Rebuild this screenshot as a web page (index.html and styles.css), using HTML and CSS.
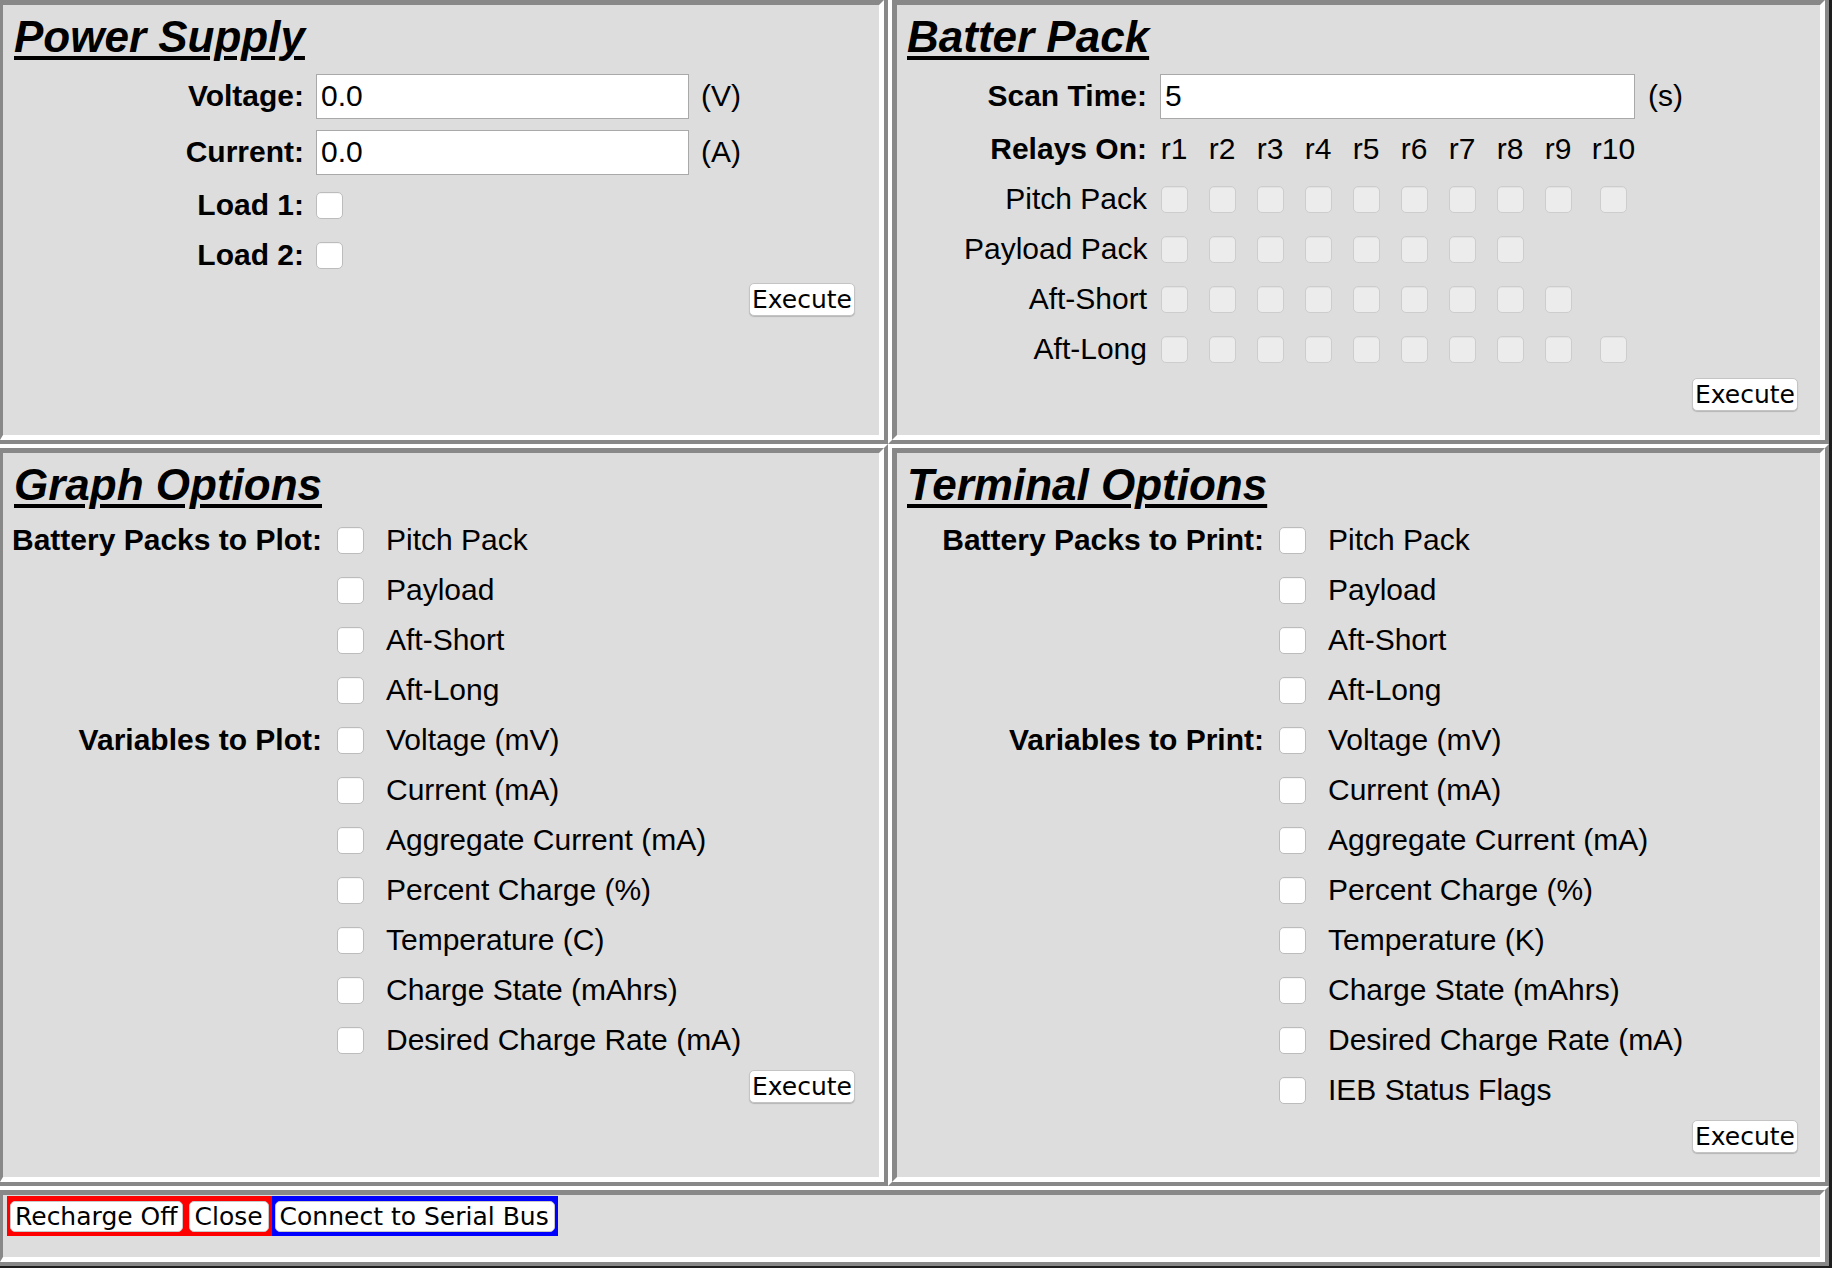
FILE: index.html
```html
<!DOCTYPE html>
<html lang="en">
<head>
<meta charset="utf-8">
<title>Battery Control Panel</title>
<link rel="stylesheet" href="styles.css">
</head>
<body>
<div class="screen">

  <div class="frame f-tl">
    <section class="panel p-left">
      <h2 class="title">Power Supply</h2>
      <div class="ps-form">
        <span class="lbl">Voltage:</span><input class="txt" type="text" value="0.0"><span class="unit">(V)</span>
        <span class="lbl">Current:</span><input class="txt" type="text" value="0.0"><span class="unit">(A)</span>
        <span class="lbl">Load 1:</span><input class="cb" type="checkbox"><span></span>
        <span class="lbl">Load 2:</span><input class="cb" type="checkbox"><span></span>
      </div>
      <button class="exec" type="button">Execute</button>
    </section>
  </div>

  <div class="frame f-tr">
    <section class="panel p-right">
      <h2 class="title">Batter Pack</h2>
      <div class="bp-form">
        <span class="lbl">Scan Time:</span><input class="txt span10" type="text" value="5"><span class="unit">(s)</span>

        <span class="lbl">Relays On:</span>
        <span class="rc">r1</span><span class="rc">r2</span><span class="rc">r3</span><span class="rc">r4</span><span class="rc">r5</span><span class="rc">r6</span><span class="rc">r7</span><span class="rc">r8</span><span class="rc">r9</span><span class="rc rc10">r10</span><span></span>

        <span class="lbl reg">Pitch Pack</span>
        <span class="rc"><input class="cb dis" type="checkbox"></span><span class="rc"><input class="cb dis" type="checkbox"></span><span class="rc"><input class="cb dis" type="checkbox"></span><span class="rc"><input class="cb dis" type="checkbox"></span><span class="rc"><input class="cb dis" type="checkbox"></span><span class="rc"><input class="cb dis" type="checkbox"></span><span class="rc"><input class="cb dis" type="checkbox"></span><span class="rc"><input class="cb dis" type="checkbox"></span><span class="rc"><input class="cb dis" type="checkbox"></span><span class="rc rc10"><input class="cb dis" type="checkbox"></span><span></span>

        <span class="lbl reg">Payload Pack</span>
        <span class="rc"><input class="cb dis" type="checkbox"></span><span class="rc"><input class="cb dis" type="checkbox"></span><span class="rc"><input class="cb dis" type="checkbox"></span><span class="rc"><input class="cb dis" type="checkbox"></span><span class="rc"><input class="cb dis" type="checkbox"></span><span class="rc"><input class="cb dis" type="checkbox"></span><span class="rc"><input class="cb dis" type="checkbox"></span><span class="rc"><input class="cb dis" type="checkbox"></span><span class="rc"></span><span class="rc rc10"></span><span></span>

        <span class="lbl reg">Aft-Short</span>
        <span class="rc"><input class="cb dis" type="checkbox"></span><span class="rc"><input class="cb dis" type="checkbox"></span><span class="rc"><input class="cb dis" type="checkbox"></span><span class="rc"><input class="cb dis" type="checkbox"></span><span class="rc"><input class="cb dis" type="checkbox"></span><span class="rc"><input class="cb dis" type="checkbox"></span><span class="rc"><input class="cb dis" type="checkbox"></span><span class="rc"><input class="cb dis" type="checkbox"></span><span class="rc"><input class="cb dis" type="checkbox"></span><span class="rc rc10"></span><span></span>

        <span class="lbl reg">Aft-Long</span>
        <span class="rc"><input class="cb dis" type="checkbox"></span><span class="rc"><input class="cb dis" type="checkbox"></span><span class="rc"><input class="cb dis" type="checkbox"></span><span class="rc"><input class="cb dis" type="checkbox"></span><span class="rc"><input class="cb dis" type="checkbox"></span><span class="rc"><input class="cb dis" type="checkbox"></span><span class="rc"><input class="cb dis" type="checkbox"></span><span class="rc"><input class="cb dis" type="checkbox"></span><span class="rc"><input class="cb dis" type="checkbox"></span><span class="rc rc10"><input class="cb dis" type="checkbox"></span><span></span>
      </div>
      <button class="exec" type="button">Execute</button>
    </section>
  </div>

  <div class="frame f-bl">
    <section class="panel p-left">
      <h2 class="title">Graph Options</h2>
      <div class="opt-form graph">
        <span class="lbl">Battery Packs to Plot:</span><input class="cb" type="checkbox"><span class="opt">Pitch Pack</span>
        <span></span><input class="cb" type="checkbox"><span class="opt">Payload</span>
        <span></span><input class="cb" type="checkbox"><span class="opt">Aft-Short</span>
        <span></span><input class="cb" type="checkbox"><span class="opt">Aft-Long</span>
        <span class="lbl">Variables to Plot:</span><input class="cb" type="checkbox"><span class="opt">Voltage (mV)</span>
        <span></span><input class="cb" type="checkbox"><span class="opt">Current (mA)</span>
        <span></span><input class="cb" type="checkbox"><span class="opt">Aggregate Current (mA)</span>
        <span></span><input class="cb" type="checkbox"><span class="opt">Percent Charge (%)</span>
        <span></span><input class="cb" type="checkbox"><span class="opt">Temperature (C)</span>
        <span></span><input class="cb" type="checkbox"><span class="opt">Charge State (mAhrs)</span>
        <span></span><input class="cb" type="checkbox"><span class="opt">Desired Charge Rate (mA)</span>
      </div>
      <button class="exec" type="button">Execute</button>
    </section>
  </div>

  <div class="frame f-br">
    <section class="panel p-right">
      <h2 class="title">Terminal Options</h2>
      <div class="opt-form term">
        <span class="lbl">Battery Packs to Print:</span><input class="cb" type="checkbox"><span class="opt">Pitch Pack</span>
        <span></span><input class="cb" type="checkbox"><span class="opt">Payload</span>
        <span></span><input class="cb" type="checkbox"><span class="opt">Aft-Short</span>
        <span></span><input class="cb" type="checkbox"><span class="opt">Aft-Long</span>
        <span class="lbl">Variables to Print:</span><input class="cb" type="checkbox"><span class="opt">Voltage (mV)</span>
        <span></span><input class="cb" type="checkbox"><span class="opt">Current (mA)</span>
        <span></span><input class="cb" type="checkbox"><span class="opt">Aggregate Current (mA)</span>
        <span></span><input class="cb" type="checkbox"><span class="opt">Percent Charge (%)</span>
        <span></span><input class="cb" type="checkbox"><span class="opt">Temperature (K)</span>
        <span></span><input class="cb" type="checkbox"><span class="opt">Charge State (mAhrs)</span>
        <span></span><input class="cb" type="checkbox"><span class="opt">Desired Charge Rate (mA)</span>
        <span></span><input class="cb" type="checkbox"><span class="opt">IEB Status Flags</span>
      </div>
      <button class="exec" type="button">Execute</button>
    </section>
  </div>

  <div class="frame f-bot">
    <section class="panel p-left bar">
      <div class="btns">
        <span class="bwrap red"><button class="bb" type="button">Recharge Off</button></span>
        <span class="bwrap red"><button class="bb" type="button">Close</button></span>
        <span class="bwrap blue"><button class="bb" type="button">Connect to Serial Bus</button></span>
      </div>
    </section>
  </div>

</div>
</body>
</html>
```

FILE: styles.css
```css
html, body {
  margin: 0;
  padding: 0;
}

body {
  background: #1d1d1d;
  font-family: "Liberation Sans", Arial, Helvetica, sans-serif;
  font-size: 30px;
  color: #000;
  width: 1832px;
  height: 1268px;
  overflow: hidden;
}

.screen {
  display: grid;
  grid-template-columns: 888px 941px;
  grid-template-rows: 444px 742px 80px;
  width: 1829px;
  height: 1266px;
}

/* outer (outset-looking) frame edge */
.frame {
  box-sizing: border-box;
  display: flex;
  border-style: solid;
  border-width: 4px;
  border-color: #fff #888 #888 #fff;
  min-width: 0;
  min-height: 0;
}

.f-tl, .f-tr { border-top-width: 0; }
.f-tl, .f-bl, .f-bot { border-left-width: 0; }
.f-bot { grid-column: 1 / 3; }

/* inner (inset-looking) panel edge */
.panel {
  flex: 1;
  box-sizing: border-box;
  display: flex;
  flex-direction: column;
  border-style: solid;
  border-width: 5px;
  border-color: #888 #fff #fff #888;
  background: #dddddd;
  min-width: 0;
}

.p-left { border-left-width: 3px; }

.title {
  margin: 0;
  padding: 7px 0 0 10px;
  font-size: 44px;
  line-height: 50px;
  font-weight: bold;
  font-style: italic;
  text-decoration: underline;
  text-decoration-thickness: 4px;
  text-underline-offset: 4px;
}

.p-left .title { padding-left: 11px; }

.lbl {
  font-weight: bold;
  text-align: right;
  white-space: nowrap;
}

.lbl.reg { font-weight: normal; }

.unit { white-space: nowrap; }

.txt {
  box-sizing: border-box;
  height: 45px;
  margin: 0;
  padding: 0 4px;
  border: 1px solid #a9a9a9;
  background: #fff;
  font-family: "Liberation Sans", Arial, Helvetica, sans-serif;
  font-size: 30px;
  color: #000;
  outline: none;
}

.cb {
  -webkit-appearance: none;
  appearance: none;
  box-sizing: border-box;
  width: 27px;
  height: 27px;
  margin: 0;
  border: 1px solid #bcbcbc;
  border-radius: 5px;
  background: #fff;
  box-shadow: inset 0 1px 0 rgba(0, 0, 0, 0.04);
}

.cb.dis {
  background: #ececec;
  border-color: #cdcdcd;
}

/* Power supply */
.ps-form {
  display: grid;
  grid-template-columns: 118px 373px max-content;
  grid-template-rows: 56px 56px 50px 50px;
  column-gap: 12px;
  align-items: center;
  justify-items: start;
  margin: 6px 0 0 183px;
}

.ps-form .lbl { justify-self: end; }
.ps-form .txt { width: 373px; }

/* Battery pack */
.bp-form {
  display: grid;
  grid-template-columns: 196px repeat(9, 48px) 43px max-content;
  grid-template-rows: 56px repeat(5, 50px);
  align-items: center;
  margin: 6px 0 0 67px;
}

.bp-form .lbl {
  padding-right: 13px;
}

.bp-form .span10 {
  grid-column: 2 / 12;
  width: 100%;
}

.bp-form .unit { padding-left: 13px; }

.rc {
  width: 28px;
  display: flex;
  justify-content: center;
  white-space: nowrap;
}

.rc.rc10 { width: 43px; }

/* graph / terminal options */
.opt-form {
  display: grid;
  grid-auto-rows: 50px;
  align-items: center;
  justify-items: start;
  margin-top: 5px;
}

.opt-form .lbl {
  justify-self: stretch;
  padding-right: 15px;
}

.opt-form.graph {
  grid-template-columns: 325px 49px max-content;
  margin-left: 9px;
}

.opt-form.term {
  grid-template-columns: 342px 49px max-content;
  margin-left: 40px;
}

.opt { white-space: nowrap; }

/* execute buttons */
.exec {
  align-self: flex-end;
  box-sizing: border-box;
  height: 33px;
  margin: 3px 24px 0 0;
  padding: 0 2px;
  border: 1px solid #c4c4c4;
  border-radius: 5px;
  background: #fff;
  box-shadow: 0 1px 1px rgba(0, 0, 0, 0.18);
  font-family: "DejaVu Sans", Verdana, sans-serif;
  font-size: 25px;
  line-height: 31px;
  color: #000;
}

.p-right .exec { margin-right: 22px; }
.bp-form + .exec { margin-top: 4px; }
.opt-form + .exec { margin-top: 5px; }

/* bottom bar */
.bar { flex-direction: row; align-items: flex-start; }

.btns {
  display: flex;
  margin: 1px 0 0 4px;
}

.bwrap {
  display: flex;
  padding: 5px 3px 4px;
}

.bwrap.red { background: #ff0000; }
.bwrap.blue { background: #0000ff; }

.bb {
  box-sizing: border-box;
  height: 31px;
  margin: 0;
  padding: 0 5px 0 4px;
  border: 1px solid #c9c9c9;
  border-radius: 5px;
  background: #fff;
  font-family: "DejaVu Sans", Verdana, sans-serif;
  font-size: 25px;
  line-height: 29px;
  color: #000;
}
```
